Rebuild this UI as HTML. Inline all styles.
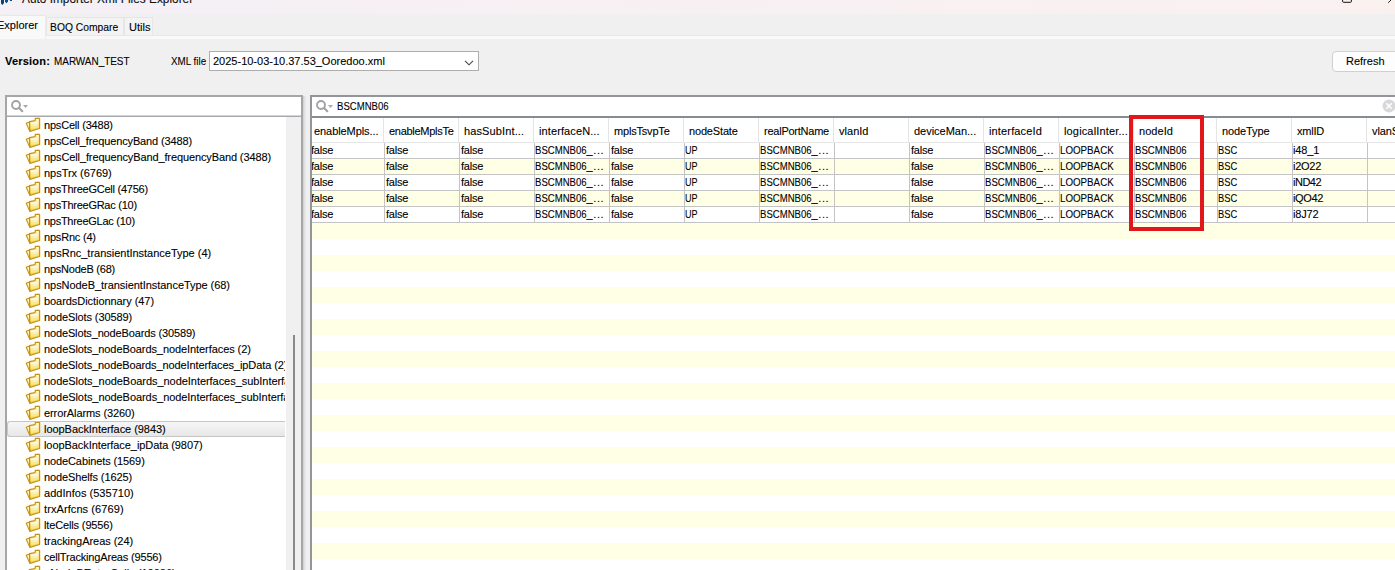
<!DOCTYPE html>
<html><head><meta charset="utf-8"><title>Auto Importer Xml Files Explorer</title>
<style>
html,body{margin:0;padding:0}
body{width:1395px;height:570px;overflow:hidden;position:relative;background:#f0f0f0;font-family:"Liberation Sans",sans-serif;font-size:11px;color:#000;-webkit-text-stroke:0.1px #000}
div,span{box-sizing:border-box}
.a{position:absolute}
.t{position:absolute;white-space:nowrap;line-height:16px;height:16px}
.u{display:inline-block;transform:scaleX(.89);transform-origin:0 50%}
.w{display:inline-block;white-space:nowrap}
#title{left:0;top:0;width:1395px;height:14px;background:linear-gradient(90deg,#f5f0f6 0%,#f7f0f3 50%,#faf1ef 100%);overflow:hidden}
#title .t{left:22px;top:-9px;font-size:11.85px;color:#111}
#strip{left:0;top:35px;width:1395px;height:4px;background:#f9f9f9;border-top:1px solid #e8e8e8}
.tab{position:absolute;background:#f3f3f3;border:1px solid #e6e6e6;border-bottom:none;top:17px;height:18px}
.tab.sel{background:#f9f9f9;border-color:#e8e8e8 #ececec #f9f9f9 #f9f9f9;top:15px;height:24px}
.box{position:absolute;background:#fff;border:2px solid #a6a6a9}
.tree{position:absolute;left:7px;top:117px;width:279px;height:453px;background:#fff;overflow:hidden}
.ti{position:absolute;left:0;width:278px;height:16px;white-space:nowrap;line-height:16px;overflow:hidden}
.ti .fi{position:absolute;left:18px;top:0}
.ti span{position:absolute;left:37px;top:0;letter-spacing:-0.08px}
.ti.sel{background:linear-gradient(#f6f6f6,#e7e7e7);border:1px solid #c6c6c6;border-right:none;border-radius:3px 0 0 3px}
.ti.sel .fi{top:-1px;left:17px}.ti.sel span{top:-1px;left:36px}
.mag{position:absolute}
.hd{position:absolute;top:0;height:25px;line-height:26px;border-bottom:1px solid #e6e6e6;white-space:nowrap;overflow:hidden;border-left:1px solid #e4e4e4;padding-left:5px;letter-spacing:-0.12px}
.row{position:absolute;left:312px;width:1083px;height:16px;overflow:hidden}
#hdr{position:absolute;left:312px;top:118px;width:1083px;height:25px;overflow:hidden}
.row.y{background:#ffffe5}
.c{position:absolute;top:0;height:16px;line-height:14px;white-space:nowrap;overflow:hidden;border-left:1px solid #c4c4c4;border-bottom:1px solid #c4c4c4;padding-left:0}
</style></head><body>

<svg width="0" height="0" style="position:absolute"><defs><linearGradient id="fg" x1="0" y1="0" x2="0" y2="1"><stop offset="0" stop-color="#fff9d6"/><stop offset="1" stop-color="#f3d23e"/></linearGradient><linearGradient id="fg2" x1="0" y1="0" x2="0" y2="1"><stop offset="0" stop-color="#fffdf0"/><stop offset="1" stop-color="#f8e05a"/></linearGradient></defs></svg>
<div id="title" class="a"><svg class="a" style="left:0;top:0" width="14" height="7" viewBox="0 0 14 7"><path d="M1 0 L4 0 L4 2.8 L2.6 5 L1 3.6 Z" fill="#0b4474"/><path d="M5 0 L8 0 L8 1.4 L6.5 3.2 L5.1 2 Z" fill="#0d4c80"/><path d="M9.8 0 L12 0 L12 1 L9.8 1 Z" fill="#0d5288"/></svg><div class="t">Auto Importer Xml Files Explorer</div>
<svg class="a" style="left:1340px;top:0" width="55" height="6" viewBox="0 0 55 6"><path d="M2.6 0 L2.6 1.3 Q2.6 2.3 3.6 2.3 L10.4 2.3 Q11.4 2.3 11.4 1.3 L11.4 0" fill="none" stroke="#111" stroke-width="1"/><path d="M48.2 2.8 L52 -1" stroke="#222" stroke-width="1"/></svg></div>
<div id="strip" class="a"></div>
<div class="tab sel" style="left:0;width:46px"></div><div class="tab" style="left:46px;width:78px"></div><div class="tab" style="left:124px;width:29px"></div>
<div class="t" style="left:-3px;top:17px">Explorer</div>
<div class="t" style="left:50px;top:19px"><span class="w" style="width:68.2px"><span class="u" style="transform:scaleX(0.9375)">BOQ Compare</span></span></div>
<div class="t" style="left:129px;top:19px">Utils</div>
<div class="t" style="left:5px;top:53px;font-weight:bold;letter-spacing:.2px">Version:</div>
<div class="t" style="left:54px;top:53px"><span class="w" style="width:75.5px"><span class="u" style="transform:scaleX(0.9017)">MARWAN_TEST</span></span></div>
<div class="t" style="left:171px;top:53px"><span class="w" style="width:35.1px"><span class="u" style="transform:scaleX(0.8925)">XML file</span></span></div>
<div class="a" style="left:209px;top:51px;width:270px;height:20px;background:#fff;border:1px solid #adadad"></div>
<div class="t" style="left:213px;top:53px">2025-10-03-10.37.53_Ooredoo.xml</div>
<svg class="a" style="left:462px;top:58px" width="14" height="10" viewBox="0 0 14 10"><path d="M3 2.8 L7 6.8 L11 2.8" fill="none" stroke="#444" stroke-width="1.1"/></svg>
<div class="a" style="left:1332px;top:51px;width:71px;height:21px;background:#fdfdfd;border:1px solid #d0d0d0;border-radius:4px"></div>
<div class="t" style="left:1346px;top:53px">Refresh</div>
<div class="box" style="left:5px;top:95px;width:298px;height:480px"></div>
<div class="a" style="left:7px;top:115px;width:294px;height:2px;background:#a6a8ad;border-top:1px solid #d4d5d8"></div>
<svg class="mag" style="left:10px;top:99px" width="24" height="16" viewBox="0 0 24 16"><circle cx="6" cy="6" r="3.95" fill="none" stroke="#a2a2a2" stroke-width="1.9"/><path d="M9 9 L12.3 12.2" stroke="#a2a2a2" stroke-width="2.1" stroke-linecap="round"/><path d="M13 6 L18 6 L15.5 9 Z" fill="#a8a8a8"/></svg>
<div class="a" style="left:286px;top:117px;width:15px;height:453px;background:#f0f0f0"></div>
<div class="a" style="left:293px;top:335px;width:2px;height:235px;background:#8a8a8a"></div>
<div class="tree">
<div class="ti" style="top:0px"><svg class="fi" width="16" height="16" viewBox="0 0 16 16"><path d="M1.2 6.3 L4.5 5 L4.9 14.4 Z" fill="#fdf4b8" stroke="#c4941c" stroke-width="1.1" stroke-linejoin="round"/><path d="M4.5 4.6 L10 3.6 L10.3 1.4 L14.6 1.4 L14.6 11.5 L4.9 14.4 Z" fill="url(#fg)" stroke="#c4941c" stroke-width="1.2" stroke-linejoin="round"/><path d="M5.8 5.8 L12.6 4.6 L12.6 10.6 L6 12.6 Z" fill="url(#fg2)"/></svg><span style="letter-spacing:-0.196px">npsCell (3488)</span></div>
<div class="ti" style="top:16px"><svg class="fi" width="16" height="16" viewBox="0 0 16 16"><path d="M1.2 6.3 L4.5 5 L4.9 14.4 Z" fill="#fdf4b8" stroke="#c4941c" stroke-width="1.1" stroke-linejoin="round"/><path d="M4.5 4.6 L10 3.6 L10.3 1.4 L14.6 1.4 L14.6 11.5 L4.9 14.4 Z" fill="url(#fg)" stroke="#c4941c" stroke-width="1.2" stroke-linejoin="round"/><path d="M5.8 5.8 L12.6 4.6 L12.6 10.6 L6 12.6 Z" fill="url(#fg2)"/></svg><span style="letter-spacing:-0.131px">npsCell_frequencyBand (3488)</span></div>
<div class="ti" style="top:32px"><svg class="fi" width="16" height="16" viewBox="0 0 16 16"><path d="M1.2 6.3 L4.5 5 L4.9 14.4 Z" fill="#fdf4b8" stroke="#c4941c" stroke-width="1.1" stroke-linejoin="round"/><path d="M4.5 4.6 L10 3.6 L10.3 1.4 L14.6 1.4 L14.6 11.5 L4.9 14.4 Z" fill="url(#fg)" stroke="#c4941c" stroke-width="1.2" stroke-linejoin="round"/><path d="M5.8 5.8 L12.6 4.6 L12.6 10.6 L6 12.6 Z" fill="url(#fg2)"/></svg><span style="letter-spacing:-0.114px">npsCell_frequencyBand_frequencyBand (3488)</span></div>
<div class="ti" style="top:48px"><svg class="fi" width="16" height="16" viewBox="0 0 16 16"><path d="M1.2 6.3 L4.5 5 L4.9 14.4 Z" fill="#fdf4b8" stroke="#c4941c" stroke-width="1.1" stroke-linejoin="round"/><path d="M4.5 4.6 L10 3.6 L10.3 1.4 L14.6 1.4 L14.6 11.5 L4.9 14.4 Z" fill="url(#fg)" stroke="#c4941c" stroke-width="1.2" stroke-linejoin="round"/><path d="M5.8 5.8 L12.6 4.6 L12.6 10.6 L6 12.6 Z" fill="url(#fg2)"/></svg><span style="letter-spacing:-0.028px">npsTrx (6769)</span></div>
<div class="ti" style="top:64px"><svg class="fi" width="16" height="16" viewBox="0 0 16 16"><path d="M1.2 6.3 L4.5 5 L4.9 14.4 Z" fill="#fdf4b8" stroke="#c4941c" stroke-width="1.1" stroke-linejoin="round"/><path d="M4.5 4.6 L10 3.6 L10.3 1.4 L14.6 1.4 L14.6 11.5 L4.9 14.4 Z" fill="url(#fg)" stroke="#c4941c" stroke-width="1.2" stroke-linejoin="round"/><path d="M5.8 5.8 L12.6 4.6 L12.6 10.6 L6 12.6 Z" fill="url(#fg2)"/></svg><span style="letter-spacing:-0.252px">npsThreeGCell (4756)</span></div>
<div class="ti" style="top:80px"><svg class="fi" width="16" height="16" viewBox="0 0 16 16"><path d="M1.2 6.3 L4.5 5 L4.9 14.4 Z" fill="#fdf4b8" stroke="#c4941c" stroke-width="1.1" stroke-linejoin="round"/><path d="M4.5 4.6 L10 3.6 L10.3 1.4 L14.6 1.4 L14.6 11.5 L4.9 14.4 Z" fill="url(#fg)" stroke="#c4941c" stroke-width="1.2" stroke-linejoin="round"/><path d="M5.8 5.8 L12.6 4.6 L12.6 10.6 L6 12.6 Z" fill="url(#fg2)"/></svg><span style="letter-spacing:-0.26px">npsThreeGRac (10)</span></div>
<div class="ti" style="top:96px"><svg class="fi" width="16" height="16" viewBox="0 0 16 16"><path d="M1.2 6.3 L4.5 5 L4.9 14.4 Z" fill="#fdf4b8" stroke="#c4941c" stroke-width="1.1" stroke-linejoin="round"/><path d="M4.5 4.6 L10 3.6 L10.3 1.4 L14.6 1.4 L14.6 11.5 L4.9 14.4 Z" fill="url(#fg)" stroke="#c4941c" stroke-width="1.2" stroke-linejoin="round"/><path d="M5.8 5.8 L12.6 4.6 L12.6 10.6 L6 12.6 Z" fill="url(#fg2)"/></svg><span style="letter-spacing:-0.27px">npsThreeGLac (10)</span></div>
<div class="ti" style="top:112px"><svg class="fi" width="16" height="16" viewBox="0 0 16 16"><path d="M1.2 6.3 L4.5 5 L4.9 14.4 Z" fill="#fdf4b8" stroke="#c4941c" stroke-width="1.1" stroke-linejoin="round"/><path d="M4.5 4.6 L10 3.6 L10.3 1.4 L14.6 1.4 L14.6 11.5 L4.9 14.4 Z" fill="url(#fg)" stroke="#c4941c" stroke-width="1.2" stroke-linejoin="round"/><path d="M5.8 5.8 L12.6 4.6 L12.6 10.6 L6 12.6 Z" fill="url(#fg2)"/></svg><span style="letter-spacing:-0.2px">npsRnc (4)</span></div>
<div class="ti" style="top:128px"><svg class="fi" width="16" height="16" viewBox="0 0 16 16"><path d="M1.2 6.3 L4.5 5 L4.9 14.4 Z" fill="#fdf4b8" stroke="#c4941c" stroke-width="1.1" stroke-linejoin="round"/><path d="M4.5 4.6 L10 3.6 L10.3 1.4 L14.6 1.4 L14.6 11.5 L4.9 14.4 Z" fill="url(#fg)" stroke="#c4941c" stroke-width="1.2" stroke-linejoin="round"/><path d="M5.8 5.8 L12.6 4.6 L12.6 10.6 L6 12.6 Z" fill="url(#fg2)"/></svg><span style="letter-spacing:-0.011px">npsRnc_transientInstanceType (4)</span></div>
<div class="ti" style="top:144px"><svg class="fi" width="16" height="16" viewBox="0 0 16 16"><path d="M1.2 6.3 L4.5 5 L4.9 14.4 Z" fill="#fdf4b8" stroke="#c4941c" stroke-width="1.1" stroke-linejoin="round"/><path d="M4.5 4.6 L10 3.6 L10.3 1.4 L14.6 1.4 L14.6 11.5 L4.9 14.4 Z" fill="url(#fg)" stroke="#c4941c" stroke-width="1.2" stroke-linejoin="round"/><path d="M5.8 5.8 L12.6 4.6 L12.6 10.6 L6 12.6 Z" fill="url(#fg2)"/></svg><span style="letter-spacing:-0.231px">npsNodeB (68)</span></div>
<div class="ti" style="top:160px"><svg class="fi" width="16" height="16" viewBox="0 0 16 16"><path d="M1.2 6.3 L4.5 5 L4.9 14.4 Z" fill="#fdf4b8" stroke="#c4941c" stroke-width="1.1" stroke-linejoin="round"/><path d="M4.5 4.6 L10 3.6 L10.3 1.4 L14.6 1.4 L14.6 11.5 L4.9 14.4 Z" fill="url(#fg)" stroke="#c4941c" stroke-width="1.2" stroke-linejoin="round"/><path d="M5.8 5.8 L12.6 4.6 L12.6 10.6 L6 12.6 Z" fill="url(#fg2)"/></svg><span style="letter-spacing:-0.05px">npsNodeB_transientInstanceType (68)</span></div>
<div class="ti" style="top:176px"><svg class="fi" width="16" height="16" viewBox="0 0 16 16"><path d="M1.2 6.3 L4.5 5 L4.9 14.4 Z" fill="#fdf4b8" stroke="#c4941c" stroke-width="1.1" stroke-linejoin="round"/><path d="M4.5 4.6 L10 3.6 L10.3 1.4 L14.6 1.4 L14.6 11.5 L4.9 14.4 Z" fill="url(#fg)" stroke="#c4941c" stroke-width="1.2" stroke-linejoin="round"/><path d="M5.8 5.8 L12.6 4.6 L12.6 10.6 L6 12.6 Z" fill="url(#fg2)"/></svg><span style="letter-spacing:-0.058px">boardsDictionnary (47)</span></div>
<div class="ti" style="top:192px"><svg class="fi" width="16" height="16" viewBox="0 0 16 16"><path d="M1.2 6.3 L4.5 5 L4.9 14.4 Z" fill="#fdf4b8" stroke="#c4941c" stroke-width="1.1" stroke-linejoin="round"/><path d="M4.5 4.6 L10 3.6 L10.3 1.4 L14.6 1.4 L14.6 11.5 L4.9 14.4 Z" fill="url(#fg)" stroke="#c4941c" stroke-width="1.2" stroke-linejoin="round"/><path d="M5.8 5.8 L12.6 4.6 L12.6 10.6 L6 12.6 Z" fill="url(#fg2)"/></svg><span style="letter-spacing:-0.112px">nodeSlots (30589)</span></div>
<div class="ti" style="top:208px"><svg class="fi" width="16" height="16" viewBox="0 0 16 16"><path d="M1.2 6.3 L4.5 5 L4.9 14.4 Z" fill="#fdf4b8" stroke="#c4941c" stroke-width="1.1" stroke-linejoin="round"/><path d="M4.5 4.6 L10 3.6 L10.3 1.4 L14.6 1.4 L14.6 11.5 L4.9 14.4 Z" fill="url(#fg)" stroke="#c4941c" stroke-width="1.2" stroke-linejoin="round"/><path d="M5.8 5.8 L12.6 4.6 L12.6 10.6 L6 12.6 Z" fill="url(#fg2)"/></svg><span style="letter-spacing:-0.141px">nodeSlots_nodeBoards (30589)</span></div>
<div class="ti" style="top:224px"><svg class="fi" width="16" height="16" viewBox="0 0 16 16"><path d="M1.2 6.3 L4.5 5 L4.9 14.4 Z" fill="#fdf4b8" stroke="#c4941c" stroke-width="1.1" stroke-linejoin="round"/><path d="M4.5 4.6 L10 3.6 L10.3 1.4 L14.6 1.4 L14.6 11.5 L4.9 14.4 Z" fill="url(#fg)" stroke="#c4941c" stroke-width="1.2" stroke-linejoin="round"/><path d="M5.8 5.8 L12.6 4.6 L12.6 10.6 L6 12.6 Z" fill="url(#fg2)"/></svg><span style="letter-spacing:-0.076px">nodeSlots_nodeBoards_nodeInterfaces (2)</span></div>
<div class="ti" style="top:240px"><svg class="fi" width="16" height="16" viewBox="0 0 16 16"><path d="M1.2 6.3 L4.5 5 L4.9 14.4 Z" fill="#fdf4b8" stroke="#c4941c" stroke-width="1.1" stroke-linejoin="round"/><path d="M4.5 4.6 L10 3.6 L10.3 1.4 L14.6 1.4 L14.6 11.5 L4.9 14.4 Z" fill="url(#fg)" stroke="#c4941c" stroke-width="1.2" stroke-linejoin="round"/><path d="M5.8 5.8 L12.6 4.6 L12.6 10.6 L6 12.6 Z" fill="url(#fg2)"/></svg><span style="letter-spacing:-0.095px">nodeSlots_nodeBoards_nodeInterfaces_ipData (2)</span></div>
<div class="ti" style="top:256px"><svg class="fi" width="16" height="16" viewBox="0 0 16 16"><path d="M1.2 6.3 L4.5 5 L4.9 14.4 Z" fill="#fdf4b8" stroke="#c4941c" stroke-width="1.1" stroke-linejoin="round"/><path d="M4.5 4.6 L10 3.6 L10.3 1.4 L14.6 1.4 L14.6 11.5 L4.9 14.4 Z" fill="url(#fg)" stroke="#c4941c" stroke-width="1.2" stroke-linejoin="round"/><path d="M5.8 5.8 L12.6 4.6 L12.6 10.6 L6 12.6 Z" fill="url(#fg2)"/></svg><span style="letter-spacing:-0.046px">nodeSlots_nodeBoards_nodeInterfaces_subInterfaces (2)</span></div>
<div class="ti" style="top:272px"><svg class="fi" width="16" height="16" viewBox="0 0 16 16"><path d="M1.2 6.3 L4.5 5 L4.9 14.4 Z" fill="#fdf4b8" stroke="#c4941c" stroke-width="1.1" stroke-linejoin="round"/><path d="M4.5 4.6 L10 3.6 L10.3 1.4 L14.6 1.4 L14.6 11.5 L4.9 14.4 Z" fill="url(#fg)" stroke="#c4941c" stroke-width="1.2" stroke-linejoin="round"/><path d="M5.8 5.8 L12.6 4.6 L12.6 10.6 L6 12.6 Z" fill="url(#fg2)"/></svg><span style="letter-spacing:-0.064px">nodeSlots_nodeBoards_nodeInterfaces_subInterfaces_ipData (2)</span></div>
<div class="ti" style="top:288px"><svg class="fi" width="16" height="16" viewBox="0 0 16 16"><path d="M1.2 6.3 L4.5 5 L4.9 14.4 Z" fill="#fdf4b8" stroke="#c4941c" stroke-width="1.1" stroke-linejoin="round"/><path d="M4.5 4.6 L10 3.6 L10.3 1.4 L14.6 1.4 L14.6 11.5 L4.9 14.4 Z" fill="url(#fg)" stroke="#c4941c" stroke-width="1.2" stroke-linejoin="round"/><path d="M5.8 5.8 L12.6 4.6 L12.6 10.6 L6 12.6 Z" fill="url(#fg2)"/></svg><span style="letter-spacing:-0.09px">errorAlarms (3260)</span></div>
<div class="ti sel" style="top:304px"><svg class="fi" width="16" height="16" viewBox="0 0 16 16"><path d="M1.2 6.3 L4.5 5 L4.9 14.4 Z" fill="#fdf4b8" stroke="#c4941c" stroke-width="1.1" stroke-linejoin="round"/><path d="M4.5 4.6 L10 3.6 L10.3 1.4 L14.6 1.4 L14.6 11.5 L4.9 14.4 Z" fill="url(#fg)" stroke="#c4941c" stroke-width="1.2" stroke-linejoin="round"/><path d="M5.8 5.8 L12.6 4.6 L12.6 10.6 L6 12.6 Z" fill="url(#fg2)"/></svg><span style="letter-spacing:-0.051px">loopBackInterface (9843)</span></div>
<div class="ti" style="top:320px"><svg class="fi" width="16" height="16" viewBox="0 0 16 16"><path d="M1.2 6.3 L4.5 5 L4.9 14.4 Z" fill="#fdf4b8" stroke="#c4941c" stroke-width="1.1" stroke-linejoin="round"/><path d="M4.5 4.6 L10 3.6 L10.3 1.4 L14.6 1.4 L14.6 11.5 L4.9 14.4 Z" fill="url(#fg)" stroke="#c4941c" stroke-width="1.2" stroke-linejoin="round"/><path d="M5.8 5.8 L12.6 4.6 L12.6 10.6 L6 12.6 Z" fill="url(#fg2)"/></svg><span style="letter-spacing:-0.072px">loopBackInterface_ipData (9807)</span></div>
<div class="ti" style="top:336px"><svg class="fi" width="16" height="16" viewBox="0 0 16 16"><path d="M1.2 6.3 L4.5 5 L4.9 14.4 Z" fill="#fdf4b8" stroke="#c4941c" stroke-width="1.1" stroke-linejoin="round"/><path d="M4.5 4.6 L10 3.6 L10.3 1.4 L14.6 1.4 L14.6 11.5 L4.9 14.4 Z" fill="url(#fg)" stroke="#c4941c" stroke-width="1.2" stroke-linejoin="round"/><path d="M5.8 5.8 L12.6 4.6 L12.6 10.6 L6 12.6 Z" fill="url(#fg2)"/></svg><span style="letter-spacing:-0.108px">nodeCabinets (1569)</span></div>
<div class="ti" style="top:352px"><svg class="fi" width="16" height="16" viewBox="0 0 16 16"><path d="M1.2 6.3 L4.5 5 L4.9 14.4 Z" fill="#fdf4b8" stroke="#c4941c" stroke-width="1.1" stroke-linejoin="round"/><path d="M4.5 4.6 L10 3.6 L10.3 1.4 L14.6 1.4 L14.6 11.5 L4.9 14.4 Z" fill="url(#fg)" stroke="#c4941c" stroke-width="1.2" stroke-linejoin="round"/><path d="M5.8 5.8 L12.6 4.6 L12.6 10.6 L6 12.6 Z" fill="url(#fg2)"/></svg><span style="letter-spacing:-0.112px">nodeShelfs (1625)</span></div>
<div class="ti" style="top:368px"><svg class="fi" width="16" height="16" viewBox="0 0 16 16"><path d="M1.2 6.3 L4.5 5 L4.9 14.4 Z" fill="#fdf4b8" stroke="#c4941c" stroke-width="1.1" stroke-linejoin="round"/><path d="M4.5 4.6 L10 3.6 L10.3 1.4 L14.6 1.4 L14.6 11.5 L4.9 14.4 Z" fill="url(#fg)" stroke="#c4941c" stroke-width="1.2" stroke-linejoin="round"/><path d="M5.8 5.8 L12.6 4.6 L12.6 10.6 L6 12.6 Z" fill="url(#fg2)"/></svg><span style="letter-spacing:0.03px">addInfos (535710)</span></div>
<div class="ti" style="top:384px"><svg class="fi" width="16" height="16" viewBox="0 0 16 16"><path d="M1.2 6.3 L4.5 5 L4.9 14.4 Z" fill="#fdf4b8" stroke="#c4941c" stroke-width="1.1" stroke-linejoin="round"/><path d="M4.5 4.6 L10 3.6 L10.3 1.4 L14.6 1.4 L14.6 11.5 L4.9 14.4 Z" fill="url(#fg)" stroke="#c4941c" stroke-width="1.2" stroke-linejoin="round"/><path d="M5.8 5.8 L12.6 4.6 L12.6 10.6 L6 12.6 Z" fill="url(#fg2)"/></svg><span style="letter-spacing:0.091px">trxArfcns (6769)</span></div>
<div class="ti" style="top:400px"><svg class="fi" width="16" height="16" viewBox="0 0 16 16"><path d="M1.2 6.3 L4.5 5 L4.9 14.4 Z" fill="#fdf4b8" stroke="#c4941c" stroke-width="1.1" stroke-linejoin="round"/><path d="M4.5 4.6 L10 3.6 L10.3 1.4 L14.6 1.4 L14.6 11.5 L4.9 14.4 Z" fill="url(#fg)" stroke="#c4941c" stroke-width="1.2" stroke-linejoin="round"/><path d="M5.8 5.8 L12.6 4.6 L12.6 10.6 L6 12.6 Z" fill="url(#fg2)"/></svg><span style="letter-spacing:-0.141px">lteCells (9556)</span></div>
<div class="ti" style="top:416px"><svg class="fi" width="16" height="16" viewBox="0 0 16 16"><path d="M1.2 6.3 L4.5 5 L4.9 14.4 Z" fill="#fdf4b8" stroke="#c4941c" stroke-width="1.1" stroke-linejoin="round"/><path d="M4.5 4.6 L10 3.6 L10.3 1.4 L14.6 1.4 L14.6 11.5 L4.9 14.4 Z" fill="url(#fg)" stroke="#c4941c" stroke-width="1.2" stroke-linejoin="round"/><path d="M5.8 5.8 L12.6 4.6 L12.6 10.6 L6 12.6 Z" fill="url(#fg2)"/></svg><span style="letter-spacing:-0.043px">trackingAreas (24)</span></div>
<div class="ti" style="top:432px"><svg class="fi" width="16" height="16" viewBox="0 0 16 16"><path d="M1.2 6.3 L4.5 5 L4.9 14.4 Z" fill="#fdf4b8" stroke="#c4941c" stroke-width="1.1" stroke-linejoin="round"/><path d="M4.5 4.6 L10 3.6 L10.3 1.4 L14.6 1.4 L14.6 11.5 L4.9 14.4 Z" fill="url(#fg)" stroke="#c4941c" stroke-width="1.2" stroke-linejoin="round"/><path d="M5.8 5.8 L12.6 4.6 L12.6 10.6 L6 12.6 Z" fill="url(#fg2)"/></svg><span style="letter-spacing:-0.17px">cellTrackingAreas (9556)</span></div>
<div class="ti" style="top:448px"><svg class="fi" width="16" height="16" viewBox="0 0 16 16"><path d="M1.2 6.3 L4.5 5 L4.9 14.4 Z" fill="#fdf4b8" stroke="#c4941c" stroke-width="1.1" stroke-linejoin="round"/><path d="M4.5 4.6 L10 3.6 L10.3 1.4 L14.6 1.4 L14.6 11.5 L4.9 14.4 Z" fill="url(#fg)" stroke="#c4941c" stroke-width="1.2" stroke-linejoin="round"/><path d="M5.8 5.8 L12.6 4.6 L12.6 10.6 L6 12.6 Z" fill="url(#fg2)"/></svg><span style="letter-spacing:0.01px">eNodeBEutraCells (10086)</span></div>
</div>
<div class="a" style="left:303px;top:96px;width:3px;height:474px;background:linear-gradient(90deg,#cfcfcf,#efefef)"></div>
<div class="box" style="left:310px;top:95px;width:1095px;height:480px;border-color:#93959a"></div>
<div class="a" style="left:312px;top:116px;width:1083px;height:2px;background:#868b94"></div>
<svg class="mag" style="left:315px;top:99px" width="24" height="16" viewBox="0 0 24 16"><circle cx="6" cy="6" r="3.95" fill="none" stroke="#a2a2a2" stroke-width="1.9"/><path d="M9 9 L12.3 12.2" stroke="#a2a2a2" stroke-width="2.1" stroke-linecap="round"/><path d="M13 6 L18 6 L15.5 9 Z" fill="#a8a8a8"/></svg>
<div class="t" style="left:336.5px;top:98px"><span class="w" style="width:51.6px"><span class="u" style="transform:scaleX(0.8702)">BSCMNB06</span></span></div>
<svg class="a" style="left:1382px;top:99px" width="14" height="14" viewBox="0 0 14 14"><circle cx="7" cy="7" r="6.5" fill="#d8d8d8"/><path d="M4.3 4.3 L9.7 9.7 M9.7 4.3 L4.3 9.7" stroke="#fff" stroke-width="1.6"/></svg>
<div id="hdr">
<div class="hd" style="left:-4px;width:75px;letter-spacing:-0.072px">enableMpls...</div>
<div class="hd" style="left:71px;width:75px;letter-spacing:-0.281px">enableMplsTe</div>
<div class="hd" style="left:146px;width:75px;letter-spacing:0.123px">hasSubInt...</div>
<div class="hd" style="left:221px;width:75px;letter-spacing:0.107px">interfaceN...</div>
<div class="hd" style="left:296px;width:75px;letter-spacing:-0.187px">mplsTsvpTe</div>
<div class="hd" style="left:371px;width:75px;letter-spacing:-0.162px">nodeState</div>
<div class="hd" style="left:446px;width:75px;letter-spacing:-0.238px">realPortName</div>
<div class="hd" style="left:521px;width:75px;letter-spacing:0.023px">vlanId</div>
<div class="hd" style="left:596px;width:75px;letter-spacing:-0.015px">deviceMan...</div>
<div class="hd" style="left:671px;width:75px;letter-spacing:0.148px">interfaceId</div>
<div class="hd" style="left:746px;width:75px;letter-spacing:0.149px">logicalInter...</div>
<div class="hd" style="left:821px;width:83px;letter-spacing:0.057px">nodeId</div>
<div class="hd" style="left:904px;width:75px;letter-spacing:-0.116px">nodeType</div>
<div class="hd" style="left:979px;width:75px;letter-spacing:-0.222px">xmlID</div>
<div class="hd" style="left:1054px;width:75px">vlanS</div>
</div>
<div class="row" style="top:143px">
<div class="c" style="left:-3px;width:75px;padding-left:1px;letter-spacing:-0.21px">false</div>
<div class="c" style="left:72px;width:75px;letter-spacing:-0.21px;padding-left:1px">false</div>
<div class="c" style="left:147px;width:75px;letter-spacing:-0.21px;padding-left:1px">false</div>
<div class="c" style="left:222px;width:75px"><span class="w" style="width:51.6px"><span class="u" style="transform:scaleX(0.8702)">BSCMNB06</span></span><span style="letter-spacing:.6px">_...</span></div>
<div class="c" style="left:297px;width:75px;letter-spacing:-0.21px;padding-left:1px">false</div>
<div class="c" style="left:372px;width:75px"><span class="w" style="width:12.6px"><span class="u" style="transform:scaleX(0.8245)">UP</span></span></div>
<div class="c" style="left:447px;width:75px"><span class="w" style="width:51.6px"><span class="u" style="transform:scaleX(0.8702)">BSCMNB06</span></span><span style="letter-spacing:.6px">_...</span></div>
<div class="c" style="left:522px;width:75px"></div>
<div class="c" style="left:597px;width:75px;letter-spacing:-0.21px;padding-left:1px">false</div>
<div class="c" style="left:672px;width:75px"><span class="w" style="width:51.6px"><span class="u" style="transform:scaleX(0.8702)">BSCMNB06</span></span><span style="letter-spacing:.6px">_...</span></div>
<div class="c" style="left:747px;width:75px"><span class="w" style="width:53.7px"><span class="u" style="transform:scaleX(0.8871)">LOOPBACK</span></span></div>
<div class="c" style="left:822px;width:83px"><span class="w" style="width:51.6px"><span class="u" style="transform:scaleX(0.8702)">BSCMNB06</span></span></div>
<div class="c" style="left:905px;width:75px"><span class="w" style="width:19.2px"><span class="u" style="transform:scaleX(0.8486)">BSC</span></span></div>
<div class="c" style="left:980px;width:75px;letter-spacing:-0.124px">i48_1</div>
<div class="c" style="left:1055px;width:75px"></div>
</div>
<div class="row y" style="top:159px">
<div class="c" style="left:-3px;width:75px;padding-left:1px;letter-spacing:-0.21px">false</div>
<div class="c" style="left:72px;width:75px;letter-spacing:-0.21px;padding-left:1px">false</div>
<div class="c" style="left:147px;width:75px;letter-spacing:-0.21px;padding-left:1px">false</div>
<div class="c" style="left:222px;width:75px"><span class="w" style="width:51.6px"><span class="u" style="transform:scaleX(0.8702)">BSCMNB06</span></span><span style="letter-spacing:.6px">_...</span></div>
<div class="c" style="left:297px;width:75px;letter-spacing:-0.21px;padding-left:1px">false</div>
<div class="c" style="left:372px;width:75px"><span class="w" style="width:12.6px"><span class="u" style="transform:scaleX(0.8245)">UP</span></span></div>
<div class="c" style="left:447px;width:75px"><span class="w" style="width:51.6px"><span class="u" style="transform:scaleX(0.8702)">BSCMNB06</span></span><span style="letter-spacing:.6px">_...</span></div>
<div class="c" style="left:522px;width:75px"></div>
<div class="c" style="left:597px;width:75px;letter-spacing:-0.21px;padding-left:1px">false</div>
<div class="c" style="left:672px;width:75px"><span class="w" style="width:51.6px"><span class="u" style="transform:scaleX(0.8702)">BSCMNB06</span></span><span style="letter-spacing:.6px">_...</span></div>
<div class="c" style="left:747px;width:75px"><span class="w" style="width:53.7px"><span class="u" style="transform:scaleX(0.8871)">LOOPBACK</span></span></div>
<div class="c" style="left:822px;width:83px"><span class="w" style="width:51.6px"><span class="u" style="transform:scaleX(0.8702)">BSCMNB06</span></span></div>
<div class="c" style="left:905px;width:75px"><span class="w" style="width:19.2px"><span class="u" style="transform:scaleX(0.8486)">BSC</span></span></div>
<div class="c" style="left:980px;width:75px;letter-spacing:-0.252px">i2O22</div>
<div class="c" style="left:1055px;width:75px"></div>
</div>
<div class="row" style="top:175px">
<div class="c" style="left:-3px;width:75px;padding-left:1px;letter-spacing:-0.21px">false</div>
<div class="c" style="left:72px;width:75px;letter-spacing:-0.21px;padding-left:1px">false</div>
<div class="c" style="left:147px;width:75px;letter-spacing:-0.21px;padding-left:1px">false</div>
<div class="c" style="left:222px;width:75px"><span class="w" style="width:51.6px"><span class="u" style="transform:scaleX(0.8702)">BSCMNB06</span></span><span style="letter-spacing:.6px">_...</span></div>
<div class="c" style="left:297px;width:75px;letter-spacing:-0.21px;padding-left:1px">false</div>
<div class="c" style="left:372px;width:75px"><span class="w" style="width:12.6px"><span class="u" style="transform:scaleX(0.8245)">UP</span></span></div>
<div class="c" style="left:447px;width:75px"><span class="w" style="width:51.6px"><span class="u" style="transform:scaleX(0.8702)">BSCMNB06</span></span><span style="letter-spacing:.6px">_...</span></div>
<div class="c" style="left:522px;width:75px"></div>
<div class="c" style="left:597px;width:75px;letter-spacing:-0.21px;padding-left:1px">false</div>
<div class="c" style="left:672px;width:75px"><span class="w" style="width:51.6px"><span class="u" style="transform:scaleX(0.8702)">BSCMNB06</span></span><span style="letter-spacing:.6px">_...</span></div>
<div class="c" style="left:747px;width:75px"><span class="w" style="width:53.7px"><span class="u" style="transform:scaleX(0.8871)">LOOPBACK</span></span></div>
<div class="c" style="left:822px;width:83px"><span class="w" style="width:51.6px"><span class="u" style="transform:scaleX(0.8702)">BSCMNB06</span></span></div>
<div class="c" style="left:905px;width:75px"><span class="w" style="width:19.2px"><span class="u" style="transform:scaleX(0.8486)">BSC</span></span></div>
<div class="c" style="left:980px;width:75px;letter-spacing:-0.496px">iND42</div>
<div class="c" style="left:1055px;width:75px"></div>
</div>
<div class="row y" style="top:191px">
<div class="c" style="left:-3px;width:75px;padding-left:1px;letter-spacing:-0.21px">false</div>
<div class="c" style="left:72px;width:75px;letter-spacing:-0.21px;padding-left:1px">false</div>
<div class="c" style="left:147px;width:75px;letter-spacing:-0.21px;padding-left:1px">false</div>
<div class="c" style="left:222px;width:75px"><span class="w" style="width:51.6px"><span class="u" style="transform:scaleX(0.8702)">BSCMNB06</span></span><span style="letter-spacing:.6px">_...</span></div>
<div class="c" style="left:297px;width:75px;letter-spacing:-0.21px;padding-left:1px">false</div>
<div class="c" style="left:372px;width:75px"><span class="w" style="width:12.6px"><span class="u" style="transform:scaleX(0.8245)">UP</span></span></div>
<div class="c" style="left:447px;width:75px"><span class="w" style="width:51.6px"><span class="u" style="transform:scaleX(0.8702)">BSCMNB06</span></span><span style="letter-spacing:.6px">_...</span></div>
<div class="c" style="left:522px;width:75px"></div>
<div class="c" style="left:597px;width:75px;letter-spacing:-0.21px;padding-left:1px">false</div>
<div class="c" style="left:672px;width:75px"><span class="w" style="width:51.6px"><span class="u" style="transform:scaleX(0.8702)">BSCMNB06</span></span><span style="letter-spacing:.6px">_...</span></div>
<div class="c" style="left:747px;width:75px"><span class="w" style="width:53.7px"><span class="u" style="transform:scaleX(0.8871)">LOOPBACK</span></span></div>
<div class="c" style="left:822px;width:83px"><span class="w" style="width:51.6px"><span class="u" style="transform:scaleX(0.8702)">BSCMNB06</span></span></div>
<div class="c" style="left:905px;width:75px"><span class="w" style="width:19.2px"><span class="u" style="transform:scaleX(0.8486)">BSC</span></span></div>
<div class="c" style="left:980px;width:75px;letter-spacing:-0.359px">iQO42</div>
<div class="c" style="left:1055px;width:75px"></div>
</div>
<div class="row" style="top:207px">
<div class="c" style="left:-3px;width:75px;padding-left:1px;letter-spacing:-0.21px">false</div>
<div class="c" style="left:72px;width:75px;letter-spacing:-0.21px;padding-left:1px">false</div>
<div class="c" style="left:147px;width:75px;letter-spacing:-0.21px;padding-left:1px">false</div>
<div class="c" style="left:222px;width:75px"><span class="w" style="width:51.6px"><span class="u" style="transform:scaleX(0.8702)">BSCMNB06</span></span><span style="letter-spacing:.6px">_...</span></div>
<div class="c" style="left:297px;width:75px;letter-spacing:-0.21px;padding-left:1px">false</div>
<div class="c" style="left:372px;width:75px"><span class="w" style="width:12.6px"><span class="u" style="transform:scaleX(0.8245)">UP</span></span></div>
<div class="c" style="left:447px;width:75px"><span class="w" style="width:51.6px"><span class="u" style="transform:scaleX(0.8702)">BSCMNB06</span></span><span style="letter-spacing:.6px">_...</span></div>
<div class="c" style="left:522px;width:75px"></div>
<div class="c" style="left:597px;width:75px;letter-spacing:-0.21px;padding-left:1px">false</div>
<div class="c" style="left:672px;width:75px"><span class="w" style="width:51.6px"><span class="u" style="transform:scaleX(0.8702)">BSCMNB06</span></span><span style="letter-spacing:.6px">_...</span></div>
<div class="c" style="left:747px;width:75px"><span class="w" style="width:53.7px"><span class="u" style="transform:scaleX(0.8871)">LOOPBACK</span></span></div>
<div class="c" style="left:822px;width:83px"><span class="w" style="width:51.6px"><span class="u" style="transform:scaleX(0.8702)">BSCMNB06</span></span></div>
<div class="c" style="left:905px;width:75px"><span class="w" style="width:19.2px"><span class="u" style="transform:scaleX(0.8486)">BSC</span></span></div>
<div class="c" style="left:980px;width:75px;letter-spacing:-0.159px">i8J72</div>
<div class="c" style="left:1055px;width:75px"></div>
</div>
<div class="row y" style="top:223px"></div>
<div class="row y" style="top:255px"></div>
<div class="row y" style="top:287px"></div>
<div class="row y" style="top:319px"></div>
<div class="row y" style="top:351px"></div>
<div class="row y" style="top:383px"></div>
<div class="row y" style="top:415px"></div>
<div class="row y" style="top:447px"></div>
<div class="row y" style="top:479px"></div>
<div class="row y" style="top:511px"></div>
<div class="row y" style="top:543px"></div>
<div class="a" style="left:1129px;top:115px;width:75px;height:116px;border:4px solid #e2171c"></div>
</body></html>
